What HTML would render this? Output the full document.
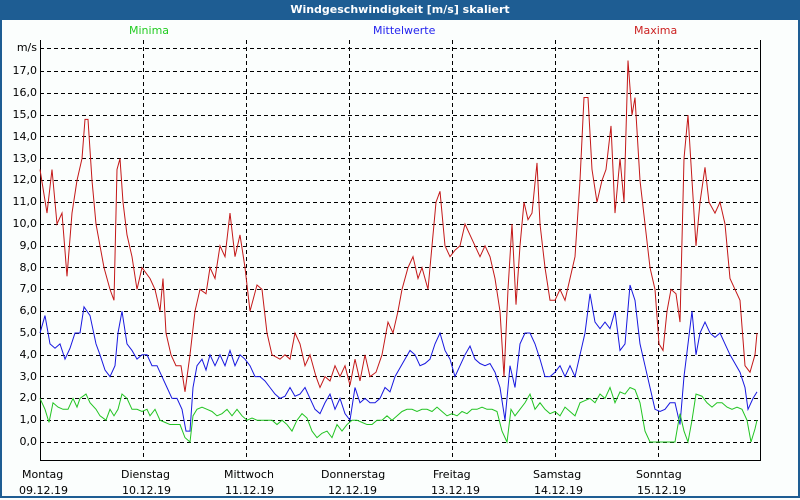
<!DOCTYPE html>
<html><head><meta charset="utf-8"><style>
body{margin:0;width:800px;height:500px;overflow:hidden;background:#fbfefd;font-family:"DejaVu Sans","Liberation Sans",sans-serif;}
#w{position:absolute;left:0;top:0;width:796px;height:496px;border:2px solid #1e5d93;border-top:none;}
#t{position:absolute;left:0;top:0;width:800px;height:20px;background:#1e5d93;color:#fff;font-weight:bold;font-size:11px;text-align:center;line-height:20px;}
.l{position:absolute;font-size:11px;color:#000;white-space:nowrap;}
.y{position:absolute;right:763px;font-size:11px;text-align:right;}
</style></head><body>
<div id="w"></div>
<div id="t">Windgeschwindigkeit [m/s] skaliert</div>
<div class="l" style="left:129px;top:24px;color:#22cc22">Minima</div>
<div class="l" style="left:373px;top:24px;color:#2222ee">Mittelwerte</div>
<div class="l" style="left:634px;top:24px;color:#cc2222">Maxima</div>
<div class="y" style="top:41px">m/s</div>
<div class="y" style="top:64px">17,0</div>
<div class="y" style="top:86px">16,0</div>
<div class="y" style="top:108px">15,0</div>
<div class="y" style="top:130px">14,0</div>
<div class="y" style="top:152px">13,0</div>
<div class="y" style="top:173px">12,0</div>
<div class="y" style="top:195px">11,0</div>
<div class="y" style="top:217px">10,0</div>
<div class="y" style="top:239px">9,0</div>
<div class="y" style="top:261px">8,0</div>
<div class="y" style="top:282px">7,0</div>
<div class="y" style="top:304px">6,0</div>
<div class="y" style="top:326px">5,0</div>
<div class="y" style="top:348px">4,0</div>
<div class="y" style="top:370px">3,0</div>
<div class="y" style="top:391px">2,0</div>
<div class="y" style="top:413px">1,0</div>
<div class="y" style="top:435px">0,0</div>
<div class="l" style="left:22px;top:468px">Montag</div><div class="l" style="left:19px;top:484px">09.12.19</div>
<div class="l" style="left:121px;top:468px">Dienstag</div><div class="l" style="left:122px;top:484px">10.12.19</div>
<div class="l" style="left:224px;top:468px">Mittwoch</div><div class="l" style="left:225px;top:484px">11.12.19</div>
<div class="l" style="left:321px;top:468px">Donnerstag</div><div class="l" style="left:328px;top:484px">12.12.19</div>
<div class="l" style="left:433px;top:468px">Freitag</div><div class="l" style="left:431px;top:484px">13.12.19</div>
<div class="l" style="left:533px;top:468px">Samstag</div><div class="l" style="left:534px;top:484px">14.12.19</div>
<div class="l" style="left:636px;top:468px">Sonntag</div><div class="l" style="left:637px;top:484px">15.12.19</div>
<svg width="800" height="500" style="position:absolute;left:0;top:0">
<g stroke="#000" stroke-dasharray="4,3" stroke-width="1">
<path d="M40 48.5H760M40 71.5H760M40 93.5H760M40 115.5H760M40 136.5H760M40 158.5H760M40 180.5H760M40 202.5H760M40 224.5H760M40 246.5H760M40 267.5H760M40 289.5H760M40 311.5H760M40 333.5H760M40 355.5H760M40 376.5H760M40 398.5H760M40 420.5H760M40 442.5H760"/>
<path d="M143.5 40V460M246.5 40V460M349.5 40V460M452.5 40V460M555.5 40V460M658.5 40V460"/>
</g>
<path d="M40.5 40V460.5H760.5V40" fill="none" stroke="#000" stroke-width="1"/>
<g transform="translate(0,442) scale(1,-21.8)" fill="none" stroke-width="1">
<polyline vector-effect="non-scaling-stroke" stroke="#c41818" points="40,12.5 47,10.5 52,12.5 57,10 62,10.5 67,7.6 72,10.5 77,12 82,13 85,14.8 88,14.8 92,12 96,10 100,9 104,8 110,7 114,6.5 117,12.5 120,13 123,11 127,9.5 132,8.5 137,7 142,8 150,7.5 155,7 160,6 163,7.5 166,5 171,4 176,3.5 181,3.5 185,2.3 190,4 195,6 200,7 206,6.8 210,8 215,7.5 220,9 225,8.5 230,10.5 235,8.5 240,9.5 245,8 250,6 257,7.2 262,7 267,5 272,4 280,3.8 285,4 290,3.8 295,5 300,4.5 305,3.5 310,4 316,3 320,2.5 325,3 330,2.8 335,3.5 340,3 345,3.5 350,2.6 355,3.8 360,2.8 365,4 370,3 376,3.2 382,4 388,5.5 393,5 398,6 402,7 408,8 413,8.5 418,7.5 422,8 428,7 432,9 436,11 440,11.5 445,9 450,8.5 455,8.8 460,9 465,10 470,9.5 475,9 480,8.5 485,9 490,8.5 495,7.5 500,6 504,3 508,7 512,10 516,6.3 520,9 524,11 528,10.2 532,10.5 537,12.8 540,10 545,8 550,6.5 555,6.5 560,7 565,6.5 570,7.5 575,8.5 580,12 584,15.8 588,15.8 592,12.5 597,11 602,12 606,12.5 611,14.5 615,10.5 620,13 624,11 628,17.5 632,15 635,15.8 640,12 645,10 650,8 655,7 659,4.5 663,4.2 667,6 671,7 676,6.8 680,5.5 684,13 688,15 692,12 696,9 700,11 705,12.6 709,11 715,10.5 720,11 725,10 730,7.5 735,7 740,6.5 745,3.5 750,3.2 755,4 757,5"/>
<polyline vector-effect="non-scaling-stroke" stroke="#1818e0" points="40,5 45,5.8 50,4.5 55,4.3 60,4.5 65,3.8 70,4.3 75,5 80,5 84,6.2 90,5.8 96,4.5 100,4 105,3.3 110,3 115,3.5 118,5 122,6 127,4.5 132,4.2 137,3.8 142,4 147,4 152,3.5 157,3.5 162,3 167,2.5 172,2 177,2 182,1.5 186,0.5 190,0.5 193,2.5 197,3.5 202,3.8 206,3.3 210,4 215,3.5 220,4 225,3.5 230,4.2 235,3.5 240,4 245,3.8 250,3.5 255,3 260,3 265,2.8 270,2.5 275,2.2 280,2 285,2.1 290,2.5 295,2.1 300,2.2 305,2.5 310,2 315,1.5 320,1.3 325,1.8 330,2.2 335,1.5 340,2 345,1.3 350,1 355,2.5 360,1.8 365,2 370,1.8 375,1.8 380,2 385,2.5 390,2.3 395,3 400,3.4 405,3.8 410,4.2 415,4 420,3.5 425,3.6 430,3.8 435,4.5 440,5 445,4.2 450,3.8 455,3 460,3.5 465,4 470,4.4 475,3.8 480,3.6 485,3.5 490,3.6 495,3.2 500,2.5 505,1 510,3.5 515,2.5 520,4.5 525,5 530,5 535,4.5 540,3.8 545,3 550,3 555,3.2 560,3.5 565,3 570,3.5 575,3 580,4 585,5 590,6.8 595,5.5 600,5.2 605,5.5 610,5.2 615,6 620,4.2 625,4.5 630,7.2 635,6.5 640,4.5 645,3.5 650,2.5 655,1.5 660,1.4 665,1.5 670,1.8 675,1.8 680,0.8 684,3 688,4.5 692,6 696,4 700,5 705,5.5 710,5 715,4.8 720,5 725,4.5 730,4 735,3.6 740,3.2 745,2.5 748,1.5 753,2 757,2.3"/>
<polyline vector-effect="non-scaling-stroke" stroke="#22c422" points="40,2 45,1.5 49,0.9 53,1.8 58,1.6 63,1.5 68,1.5 73,2 77,1.6 80,2 86,2.2 90,1.8 96,1.5 100,1.2 106,1 110,1.5 114,1.2 118,1.5 122,2.2 127,2 132,1.5 137,1.5 142,1.4 147,1.5 150,1.2 155,1.5 160,1 165,0.9 170,0.8 175,0.8 180,0.8 185,0.2 190,0 193,1.2 197,1.5 202,1.6 207,1.5 212,1.4 217,1.2 222,1.3 227,1.5 232,1.2 237,1.5 242,1.2 247,1 252,1.1 257,1 262,1 267,1 272,1 277,0.8 282,1 287,0.8 292,0.5 297,1 302,1.3 307,1.1 312,0.5 317,0.2 322,0.4 327,0.5 332,0.2 337,0.8 342,0.5 347,0.8 352,1 357,1 362,0.9 367,0.8 372,0.8 377,1 382,1 387,1.2 392,1 397,1.2 402,1.4 407,1.5 412,1.5 417,1.4 422,1.5 427,1.5 432,1.4 437,1.6 442,1.4 447,1.2 452,1.3 457,1.2 462,1.4 467,1.3 472,1.5 477,1.5 482,1.6 487,1.5 492,1.5 497,1.4 502,0.5 507,0 511,1.5 515,1.2 520,1.5 525,1.8 530,2.2 535,1.5 540,1.8 545,1.5 550,1.3 555,1.4 560,1.2 565,1.6 570,1.4 575,1.2 580,1.8 585,1.9 590,2 595,1.8 600,2.2 605,2 610,2.5 615,1.8 620,2.3 625,2.2 630,2.5 635,2.4 640,1.8 645,0.5 650,0 660,0 670,0 675,0 678,0.8 680,1.3 684,0.5 688,0 692,1 696,2.2 702,2.1 707,1.8 712,1.6 717,1.8 722,1.8 727,1.6 732,1.5 737,1.6 742,1.5 747,1 751,0 755,0.6 757,1"/>
</g>
</svg>
</body></html>
